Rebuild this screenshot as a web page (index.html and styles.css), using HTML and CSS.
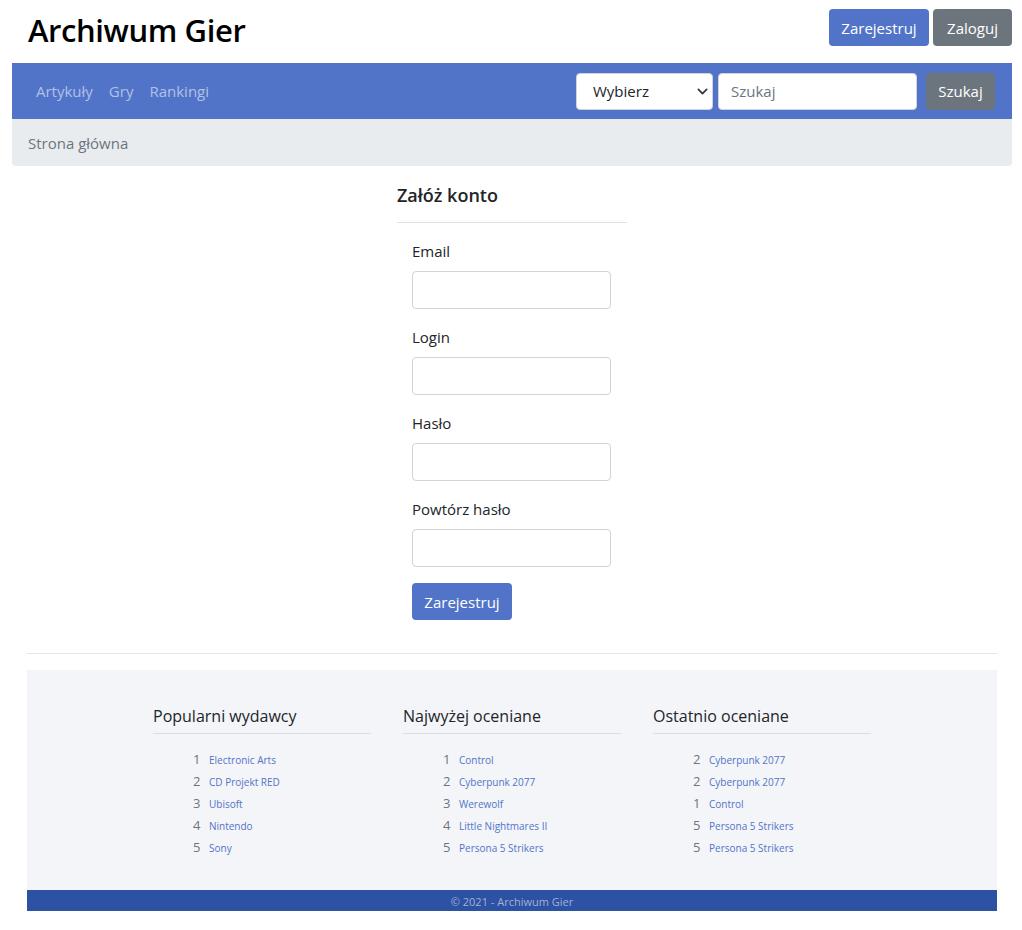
FILE: index.html
```html
<!DOCTYPE html>
<html lang="pl">
<head>
<meta charset="utf-8">
<title>Archiwum Gier</title>
<link rel="stylesheet" href="styles.css">
</head>
<body>
<div class="page">
  <header class="top">
    <h1 class="brand">Archiwum Gier</h1>
    <div class="auth">
      <a class="btn btn-primary" href="#">Zarejestruj</a>
      <a class="btn btn-secondary" href="#">Zaloguj</a>
    </div>
  </header>
  <nav class="navbar">
    <ul class="nav-links">
      <li><a href="#">Artykuły</a></li>
      <li><a href="#">Gry</a></li>
      <li><a href="#">Rankingi</a></li>
    </ul>
    <form class="search">
      <div class="select-wrap">
        <select class="select"><option>Wybierz</option></select>
        <svg class="chev" viewBox="0 0 16 16" width="11" height="11"><path d="M2 5l6 6 6-6" fill="none" stroke="#343a40" stroke-width="2.6" stroke-linecap="round" stroke-linejoin="round"/></svg>
      </div>
      <input class="input search-input" type="text" placeholder="Szukaj">
      <button class="btn btn-secondary search-btn" type="button">Szukaj</button>
    </form>
  </nav>
  <div class="breadcrumb">Strona główna</div>

  <main class="container">
    <section class="register">
      <h5 class="reg-title">Załóż konto</h5>
      <div class="reg-body">
        <label class="field"><span class="label">Email</span><input class="input" type="email"></label>
        <label class="field"><span class="label">Login</span><input class="input" type="text"></label>
        <label class="field"><span class="label">Hasło</span><input class="input" type="password"></label>
        <label class="field"><span class="label">Powtórz hasło</span><input class="input" type="password"></label>
        <button class="btn btn-primary submit" type="button">Zarejestruj</button>
      </div>
    </section>
    <hr class="divider">
    <footer class="footer">
      <div class="cols">
        <div class="col">
          <h5 class="col-title">Popularni wydawcy</h5>
          <ol class="rank">
            <li><span class="num">1</span><a href="#">Electronic Arts</a></li>
            <li><span class="num">2</span><a href="#">CD Projekt RED</a></li>
            <li><span class="num">3</span><a href="#">Ubisoft</a></li>
            <li><span class="num">4</span><a href="#">Nintendo</a></li>
            <li><span class="num">5</span><a href="#">Sony</a></li>
          </ol>
        </div>
        <div class="col">
          <h5 class="col-title">Najwyżej oceniane</h5>
          <ol class="rank">
            <li><span class="num">1</span><a href="#">Control</a></li>
            <li><span class="num">2</span><a href="#">Cyberpunk 2077</a></li>
            <li><span class="num">3</span><a href="#">Werewolf</a></li>
            <li><span class="num">4</span><a href="#">Little Nightmares II</a></li>
            <li><span class="num">5</span><a href="#">Persona 5 Strikers</a></li>
          </ol>
        </div>
        <div class="col">
          <h5 class="col-title">Ostatnio oceniane</h5>
          <ol class="rank">
            <li><span class="num">2</span><a href="#">Cyberpunk 2077</a></li>
            <li><span class="num">2</span><a href="#">Cyberpunk 2077</a></li>
            <li><span class="num">1</span><a href="#">Control</a></li>
            <li><span class="num">5</span><a href="#">Persona 5 Strikers</a></li>
            <li><span class="num">5</span><a href="#">Persona 5 Strikers</a></li>
          </ol>
        </div>
      </div>
      <div class="copy">© 2021 - Archiwum Gier</div>
    </footer>
  </main>
</div>
</body>
</html>
```

FILE: styles.css
```css
* { box-sizing: border-box; }
html, body { margin: 0; padding: 0; background: #fff; }
body {
  font-family: "Open Sans", "Noto Sans", "Liberation Sans", sans-serif;
  font-size: 15px;
  color: #212529;
}
a { text-decoration: none; }

.page { padding: 0 10px 0 12px; }

.top {
  display: flex;
  justify-content: space-between;
  align-items: flex-start;
  height: 63px;
  padding-left: 16px;
}
.brand {
  margin: 8px 0 0;
  font-size: 31px;
  font-weight: 600;
  line-height: 44px;
  color: #000;
  letter-spacing: -0.4px;
}
.auth { display: flex; gap: 4px; margin-top: 9px; }

.btn {
  display: inline-flex;
  align-items: center;
  justify-content: center;
  height: 37px;
  padding: 0 12px;
  border: none;
  border-radius: 4px;
  font-family: inherit;
  font-size: 15px;
  color: #fff;
  cursor: pointer;
}
.btn-primary { background: #5174c8; }
.btn-secondary { background: #6c757d; }
.auth .btn-primary { width: 100px; }
.auth .btn-secondary { width: 79px; }

.navbar {
  display: flex;
  justify-content: space-between;
  align-items: center;
  height: 56px;
  background: #5174c8;
  padding: 0 17px 0 16px;
}
.nav-links { display: flex; list-style: none; margin: 0; padding: 0; }
.nav-links a {
  display: block;
  padding: 8px 8px;
  color: #b1c0e6;
  font-size: 15px;
}
.search { display: flex; align-items: center; }
.select-wrap { position: relative; width: 137px; height: 37px; }
.select {
  appearance: none;
  -webkit-appearance: none;
  width: 100%;
  height: 100%;
  border: 1px solid #ced4da;
  border-radius: 4px;
  background: #fff;
  padding: 0 16px;
  font-family: inherit;
  font-size: 15px;
  color: #212529;
}
.chev { position: absolute; right: 5px; top: 13px; pointer-events: none; }
.input {
  display: block;
  height: 37px;
  border: 1px solid #ced4da;
  border-radius: 4px;
  background: #fff;
  padding: 0 12px;
  font-family: inherit;
  font-size: 15px;
  color: #212529;
}
.input::placeholder { color: #6c757d; }
.search-input { width: 199px; margin-left: 5px; }
.search-btn { margin-left: 9px; width: 69px; height: 37px; }

.breadcrumb {
  height: 47px;
  background: #e9ecef;
  border-radius: 0 0 4px 4px;
  padding: 0 16px;
  display: flex;
  align-items: center;
  color: #6c757d;
  font-size: 15px;
}

.container { padding: 0 15px; }

.register { width: 230px; margin: 0 auto; padding-top: 16px; }
.reg-title {
  margin: 0;
  padding-bottom: 14px;
  font-size: 18px;
  font-weight: 600;
  line-height: 26px;
  color: #212529;
  border-bottom: 1px solid #dee2e6;
}
.reg-body { padding: 16px 15px 0; }
.field { display: block; margin-bottom: 16px; }
.label { display: block; line-height: 24px; margin-bottom: 8px; font-size: 15px; }
.field .input { width: 199px; height: 38px; }
.submit { width: 100px; height: 37px; }

.divider {
  margin: 33px 0 16px;
  border: 0;
  border-top: 1px solid #e3e5e8;
}

.footer { background: #f4f5f9; }
.cols {
  display: flex;
  justify-content: center;
  padding: 34px 0 32px;
}
.col { width: 250px; padding: 0 16px; }
.col-title {
  margin: 0;
  font-size: 16px;
  font-weight: 400;
  line-height: 24px;
  padding-bottom: 5px;
  border-bottom: 1px solid #dcdee3;
  color: #212529;
}
.rank { list-style: none; margin: 0; padding: 14px 0 0 40px; }
.rank li { display: flex; align-items: baseline; height: 22px; line-height: 22px; }
.num { width: 16px; font-size: 13px; color: #6c757d; }
.rank a { font-size: 10px; color: #5174c8; }

.copy {
  background: #2d52a3;
  height: 21px;
  line-height: 24px;
  text-align: center;
  font-size: 11px;
  color: #a0b1d6;
}
```
